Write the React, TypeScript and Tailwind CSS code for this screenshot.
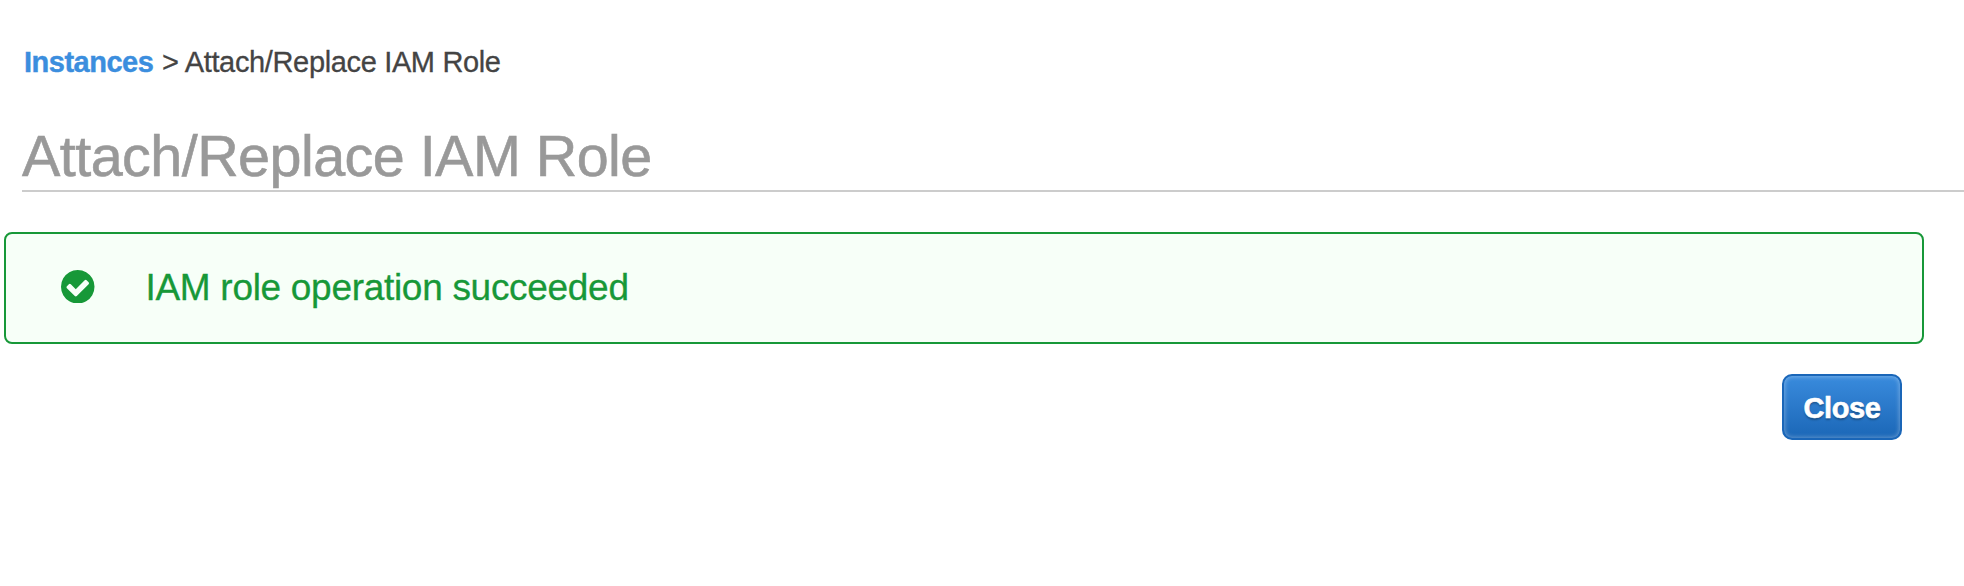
function CheckCircleIcon() {
  return (
    <svg viewBox="128 128 1536 1536" className="mb-[3px] size-[33.5px] shrink-0" fill="currentColor" aria-hidden="true">
      <path d="M1412 734q0-28-18-46l-91-90q-19-19-45-19t-45 19l-408 407-226-226q-19-19-45-19t-45 19l-91 90q-18 18-18 46 0 27 18 45l362 362q19 19 45 19 27 0 46-19l543-543q18-18 18-45zm252 162q0 209-103 385.5t-279.5 279.5-385.5 103-385.5-103-279.5-279.5-103-385.5 103-385.5 279.5-279.5 385.5-103 385.5 103 279.5 279.5 103 385.5z" />
    </svg>
  );
}

export default function App() {
  return (
    <main className="flex h-[586px] w-full flex-col overflow-hidden bg-white font-['Liberation_Sans',Arial,sans-serif] antialiased">
      <nav className="mt-[42px] ml-6 flex h-10 items-center whitespace-pre text-[29px] leading-10 text-[#444444]">
        <a className="font-bold tracking-[-0.5px] text-[#3b8ede] [-webkit-text-stroke:0.4px_#3b8ede]">Instances</a>
        <span className="ml-px tracking-[-0.35px] [-webkit-text-stroke:0.3px_#444444]"> &gt; Attach/Replace IAM Role</span>
      </nav>

      <h1 className="mt-[38px] ml-[22px] h-[72px] border-b-2 border-[#cccccc] text-[57.5px] leading-[73px] text-[#999999]">
        <span className="tracking-[-0.55px] [-webkit-text-stroke:0.6px_#999999]">Attach/Replace IAM Role</span>
      </h1>

      <section className="mt-10 mr-10 ml-1 flex h-28 items-center rounded-lg border-2 border-[#179838] bg-[#f7fff8] pl-[55px] text-[#179838]">
        <CheckCircleIcon />
        <p className="ml-[51px] text-[37px] leading-[44px] tracking-[-0.3px] [-webkit-text-stroke:0.3px_#179838]">
          IAM role operation succeeded
        </p>
      </section>

      <footer className="mt-[30px] mr-[62px] flex justify-end">
        <button className="flex h-[66px] w-[120px] items-center justify-center rounded-[10px] border-2 border-[#1a66b8] bg-linear-to-b from-[#398bdd] to-[#1b67b7] pt-[4px] text-[29px] font-bold tracking-[-0.4px] text-white shadow-[inset_0_0_4px_1px_rgba(255,255,255,0.3)] [-webkit-text-stroke:0.6px_white] [text-shadow:0_2px_2px_rgba(0,0,0,0.3)]">
          Close
        </button>
      </footer>
    </main>
  );
}
